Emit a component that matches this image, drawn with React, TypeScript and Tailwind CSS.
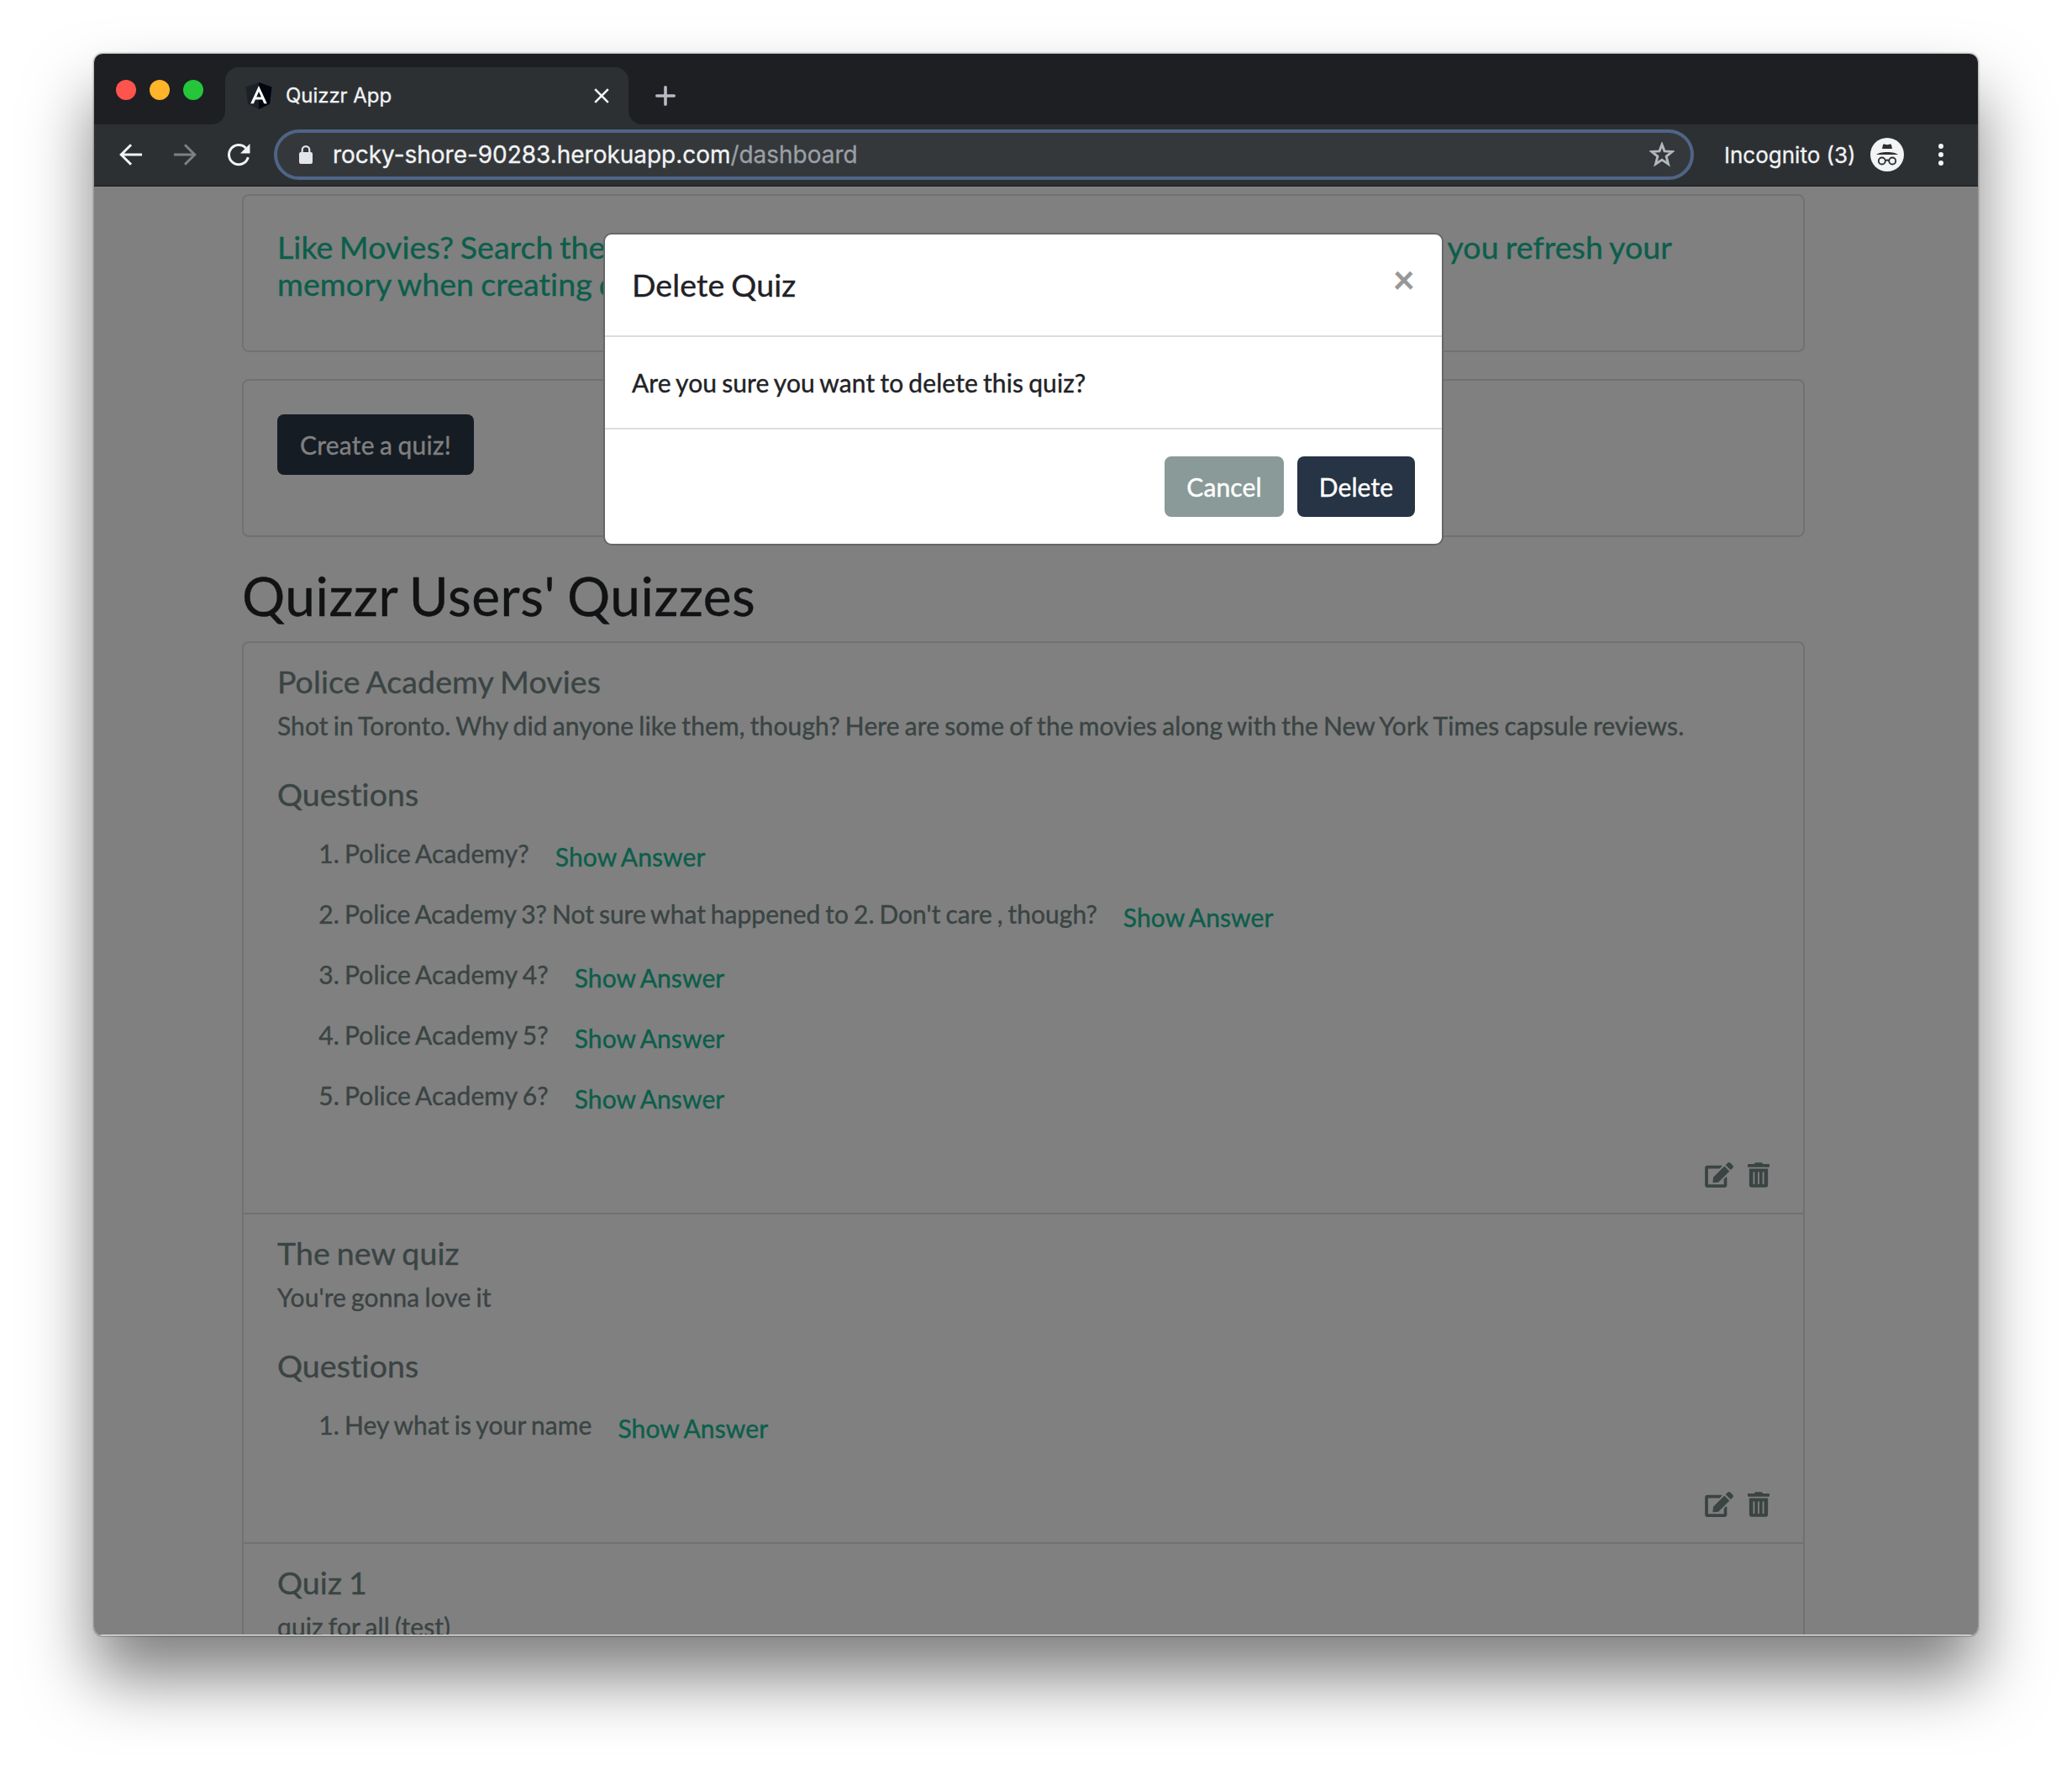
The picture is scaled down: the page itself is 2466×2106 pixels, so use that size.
import React from "react";
import { FaEdit, FaTrashAlt } from "react-icons/fa";

type Question = { text: string; className?: string };
type Quiz = { title: string; description: string; questions: Question[] };

const quizzes: Quiz[] = [
  {
    title: "Police Academy Movies",
    description:
      "Shot in Toronto. Why did anyone like them, though? Here are some of the movies along with the New York Times capsule reviews.",
    questions: [
      { text: "Police Academy?" },
      { text: "Police Academy 3? Not sure what happened to 2. Don't care , though?", className: "tracking-normal" },
      { text: "Police Academy 4?" },
      { text: "Police Academy 5?" },
      { text: "Police Academy 6?" },
    ],
  },
  { title: "The new quiz", description: "You're gonna love it", questions: [{ text: "Hey what is your name" }] },
  { title: "Quiz 1", description: "quiz for all (test)", questions: [] },
];

function TabStrip() {
  return (
    <div className="flex h-[84px] shrink-0 items-end bg-[#1e1f23]">
      <div className="flex h-[84px] w-[156px] items-center gap-4 pt-[2px] pl-[26px]">
        <span className="size-6 rounded-full bg-[#ff544d]" />
        <span className="size-6 rounded-full bg-[#ffb429]" />
        <span className="size-6 rounded-full bg-[#25c63a]" />
      </div>
      <div className="relative flex h-[68px] w-[480px] items-center rounded-t-[16px] bg-[#2d3033] pr-[22px] pl-6">
        <span className="absolute bottom-0 -left-4 size-4 bg-[#2d3033]">
          <span className="block size-4 rounded-br-[16px] bg-[#1e1f23]" />
        </span>
        <span className="absolute -right-4 bottom-0 size-4 bg-[#2d3033]">
          <span className="block size-4 rounded-bl-[16px] bg-[#1e1f23]" />
        </span>
        <svg className="size-8" viewBox="0 0 32 32">
          <path d="M16 0 31.5 5.4 29 25.5 16 32 3 25.5.5 5.4Z" fill="#1c2027" />
          <path d="M16 0 31.5 5.4 29 25.5 16 32Z" fill="#02060e" />
          <path d="M16 4 6.2 25.3h3.7l2-4.9h8.3l2 4.9h3.6Zm0 6.9 2.9 6.6h-5.7Z" fill="#fff" />
        </svg>
        <span className="ml-4 flex-1 font-['Inter'] text-[24px] tracking-[-0.05px] whitespace-nowrap text-[#f1f3f4] [-webkit-text-stroke:0.3px]">
          Quizzr App
        </span>
        <svg className="size-5" viewBox="0 0 20 20" stroke="#f1f3f4" strokeWidth="2.6" fill="none">
          <path d="M2.2 2.2 17.8 17.8M17.8 2.2 2.2 17.8" />
        </svg>
      </div>
      <svg className="mb-[22px] ml-8 size-6" viewBox="0 0 24 24" stroke="#b9bbc2" strokeWidth="3.6" fill="none" strokeLinecap="round">
        <path d="M12 1.8V22.2M1.8 12H22.2" />
      </svg>
    </div>
  );
}

function Toolbar() {
  return (
    <div className="flex h-[74px] shrink-0 items-center border-b-2 border-[#232528] bg-[#2d3033] pl-[30px]">
      <svg className="h-[26px] w-[27px]" viewBox="0 0 27 26" stroke="#f1f3f4" strokeWidth="3" fill="none">
        <path d="M14 1.2 2.2 13 14 24.8M2.2 13H27" />
      </svg>
      <svg className="ml-[38px] h-[26px] w-[27px]" viewBox="0 0 27 26" stroke="#7d8083" strokeWidth="3" fill="none">
        <path d="M13 1.2 24.8 13 13 24.8M24.8 13H0" />
      </svg>
      <svg className="ml-[36px] size-7" viewBox="0 0 28 28" fill="none">
        <path d="M25.3 17.2A11.6 11.6 0 1 1 22.6 6.2" stroke="#f1f3f4" strokeWidth="3" />
        <path d="M27.5 1V12.5H16Z" fill="#f1f3f4" />
      </svg>
      <div className="ml-[28px] flex h-[60px] w-[1690px] items-center rounded-full border-4 border-[#4f6587] bg-[#35383b] pr-[19px] pl-[26px]">
        <svg className="h-[22px] w-4" viewBox="0 0 16 22" fill="none">
          <rect x="0" y="8" width="16" height="14" rx="2" fill="#e3e5ea" />
          <path d="M3.7 9V5.4a4.3 4.3 0 0 1 8.6 0V9" stroke="#e3e5ea" strokeWidth="2.2" />
        </svg>
        <span className="ml-[24px] flex-1 font-['Inter'] text-[28px] tracking-[-0.03px] whitespace-nowrap text-[#f1f3f4] [-webkit-text-stroke:0.3px]">
          rocky-shore-90283.herokuapp.com<span className="text-[#9aa0a6]">/dashboard</span>
        </span>
        <svg className="size-[30px]" viewBox="0 0 30 30" fill="none">
          <path
            d="M15 4.2 17.7 11.3 25.8 11.8 19.6 16.8 21.7 25 15 20.5 8.3 25 10.4 16.8 4.2 11.8 12.3 11.3Z"
            stroke="#b4b7bd"
            strokeWidth="2.6"
            transform="translate(15 15) scale(1.12) translate(-15 -15)"
          />
        </svg>
      </div>
      <span className="ml-[36px] w-[156px] font-['Inter'] text-[26px] whitespace-nowrap text-[#f1f3f4] [-webkit-text-stroke:0.3px]">
        Incognito (3)
      </span>
      <svg className="ml-[18px] size-10" viewBox="0 0 40 40" fill="none">
        <circle cx="20" cy="20" r="20" fill="#f1f3f4" />
        <path d="M15 8.2c.3-.8 1-.9 1.700-.6 2.200.9 4.400.9 6.600 0 .7-.3 1.400-.2 1.700.6L26 13H14Z" fill="#2d3033" />
        <path d="M7 20c3-1.800 6-3 13-3s10 1.200 13 3Z" fill="#2d3033" />
        <circle cx="13.800" cy="27.500" r="4" stroke="#2d3033" strokeWidth="1.800" />
        <circle cx="26.200" cy="27.500" r="4" stroke="#2d3033" strokeWidth="1.800" />
        <path d="M17.600 27.300c1.500-1 3.300-1 4.800 0" stroke="#2d3033" strokeWidth="1.800" />
      </svg>
      <div className="ml-[41px] flex flex-col gap-1">
        <span className="size-1.5 rounded-full bg-[#f1f3f4]" />
        <span className="size-1.5 rounded-full bg-[#f1f3f4]" />
        <span className="size-1.5 rounded-full bg-[#f1f3f4]" />
      </div>
    </div>
  );
}

function QuizItem({ quiz }: { quiz: Quiz }) {
  return (
    <article className="border-b-2 border-[#717171] px-10 pt-[23px] pb-[29px] last:h-[200px] last:border-b-0">
      <h5 className="text-[37.5px] leading-[45px]">{quiz.title}</h5>
      <p className="mt-2 leading-[45px] whitespace-nowrap">{quiz.description}</p>
      {quiz.questions.length > 0 && (
        <>
          <h5 className="mt-9 text-[37.5px] leading-[45px]">Questions</h5>
          <ol className="mt-[17px]">
            {quiz.questions.map((question, i) => (
              <li key={question.text} className="flex h-[72px] pt-[9px] leading-[45px] whitespace-nowrap">
                <span className="w-[74px] text-right">{i + 1}.</span>
                <span className={`ml-[6px] ${question.className ?? ""}`}>{question.text}</span>
                <span className="ml-[31px] pt-1 text-[#0c5e4b]">Show Answer</span>
              </li>
            ))}
          </ol>
          <div className="mt-[38px] flex h-[32px] items-center justify-end gap-[17px]">
            <FaEdit className="h-[30px] w-[34px]" />
            <FaTrashAlt className="h-[30px] w-[26px]" />
          </div>
        </>
      )}
    </article>
  );
}

function DeleteDialog() {
  return (
    <div className="absolute top-[55px] left-[606px] w-[1000px] rounded-[10px] border-2 border-[#666666] bg-white text-[#1f2226]">
      <div className="flex h-[122px] justify-between border-b-2 border-[#d9dee2] px-8 pt-[37px]">
        <h5 className="text-[37.5px] leading-[45px]">Delete Quiz</h5>
        <span className="-mt-[6px] text-[45px] leading-[45px] font-bold text-[#979797]">×</span>
      </div>
      <div className="h-[110px] border-b-2 border-[#d9dee2] pt-[32px] pl-8 leading-[45px]">Are you sure you want to delete this quiz?</div>
      <div className="flex h-[136px] justify-end gap-4 pt-8 pr-8 text-white">
        <span className="flex h-[72px] w-[142px] items-center justify-center rounded-lg bg-[#8a9a99]">Cancel</span>
        <span className="flex h-[72px] w-[140px] items-center justify-center rounded-lg bg-[#263445]">Delete</span>
      </div>
    </div>
  );
}

export default function App() {
  return (
    <div className="h-[2106px] w-[2466px] overflow-hidden bg-white pt-16 pl-[112px]">
      <div className="w-[2242px] rounded-[10px] shadow-[0_0_2px_1px_rgba(0,0,0,0.3),0_50px_80px_rgba(0,0,0,0.5)]">
        <div className="flex h-[1882px] flex-col overflow-hidden rounded-[10px]">
          <TabStrip />
          <Toolbar />
          <main className="relative min-h-0 flex-1 overflow-hidden border-b border-white bg-[#808080] pt-[9px] pl-[176px] font-['Lato'] text-[30px] tracking-[0.1px] text-[#3a4443] [font-variant-ligatures:none] [word-spacing:-1.7px] [-webkit-text-stroke:0.4px]">
            <section className="h-[188px] w-[1860px] rounded-lg border-2 border-[#717171] px-10 pt-[39px] text-[37.5px] leading-[44px] text-[#0c5e4b]">
              <div className="flex w-[1660px] justify-between whitespace-nowrap">
                <span className="[word-spacing:-2.3px]">Like Movies? Search the New York Times</span>
                <span>you refresh your</span>
              </div>
              <div>memory when creating questions.</div>
            </section>
            <section className="mt-8 flex h-[188px] w-[1860px] items-start rounded-lg border-2 border-[#717171] px-10 pt-10">
              <span className="flex h-[72px] w-[234px] items-center justify-center rounded-lg bg-[#151c24] tracking-[0.25px] text-[#808080]">
                Create a quiz!
              </span>
            </section>
            <h2 className="mt-[31px] h-[93px] text-[64px] leading-[77px] tracking-[0.55px] text-[#101214] [word-spacing:-3px]">
              Quizzr Users' Quizzes
            </h2>
            <section className="w-[1860px] rounded-t-lg border-2 border-b-0 border-[#717171]">
              {quizzes.map((quiz) => (
                <QuizItem key={quiz.title} quiz={quiz} />
              ))}
            </section>
            <DeleteDialog />
          </main>
        </div>
      </div>
    </div>
  );
}
